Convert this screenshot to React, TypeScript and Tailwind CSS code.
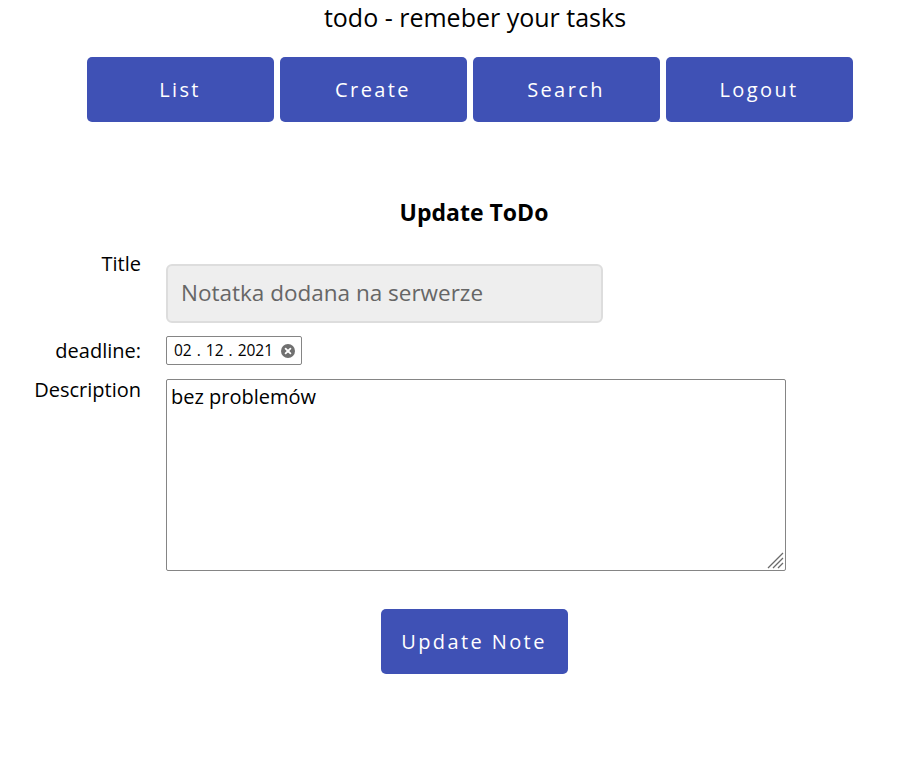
import React from "react";

const navItems = ["List", "Create", "Search", "Logout"];

function ClearIcon() {
  return (
    <svg width="14" height="14" viewBox="0 0 14 14" className="ml-[8px]">
      <circle cx="7" cy="7" r="7" fill="#707070" />
      <path d="M4.6 4.6 L9.4 9.4 M9.4 4.6 L4.6 9.4" stroke="#fff" strokeWidth="1.8" strokeLinecap="round" />
    </svg>
  );
}

function ResizeGrip() {
  return (
    <svg width="18" height="18" viewBox="0 0 18 18" className="pointer-events-none absolute bottom-[2px] right-[2px]">
      <path d="M17 2 L2 17 M17 7 L7 17 M17 12 L12 17" stroke="#6b6b6b" strokeWidth="1.3" />
    </svg>
  );
}

export default function App() {
  return (
    <div className="min-h-screen w-[924px] bg-white text-black" style={{ fontFamily: '"Open Sans", sans-serif' }}>
      {/* Header */}
      <h1 className="text-center text-[25px] leading-[34px] pl-[26px]">todo - remeber your tasks</h1>

      <nav className="mt-[23px] flex justify-center gap-[6px] pl-[15px]">
        {navItems.map((item) => (
          <button
            key={item}
            className="h-[65px] w-[187px] rounded-[5px] bg-[#3f51b5] text-[20px] tracking-[2.4px] text-white"
          >
            {item}
          </button>
        ))}
      </nav>

      {/* Form */}
      <h2 className="mt-[74px] text-center text-[23px] font-bold leading-[32px] pl-[24px]">Update ToDo</h2>

      <div className="mt-[36px] flex flex-col">
        <div className="flex items-start">
          <label className="-mt-[14px] w-[141px] text-right text-[20px] leading-[28px]">Title</label>
          <input
            readOnly
            value="Notatka dodana na serwerze"
            className="ml-[25px] h-[59px] w-[437px] rounded-[6px] border-2 border-[#dddddd] bg-[#eeeeee] px-[13px] pb-[2px] text-[22.5px] text-[#666666] outline-none"
          />
        </div>

        <div className="mt-[13px] flex items-center">
          <label className="w-[141px] text-right text-[20px] leading-[28px]">deadline:</label>
          <div className="ml-[25px] flex h-[29px] w-[136px] items-center rounded-[2px] border border-[#858585] pl-[7px] text-[15.5px]">
            <span>02</span>
            <span className="mx-[5px]">.</span>
            <span>12</span>
            <span className="mx-[5px]">.</span>
            <span>2021</span>
            <ClearIcon />
          </div>
        </div>

        <div className="mt-[14px] flex items-start">
          <label className="-mt-[3px] w-[141px] text-right text-[20px] leading-[28px]">Description</label>
          <div className="relative ml-[25px]">
            <textarea
              defaultValue="bez problemów"
              className="block h-[192px] w-[620px] resize-none rounded-[2px] border border-[#858585] px-[4px] py-[3px] text-[20px] leading-[28px] outline-none"
            />
            <ResizeGrip />
          </div>
        </div>
      </div>

      <div className="mt-[38px] flex justify-center pl-[24px]">
        <button className="h-[65px] w-[187px] rounded-[5px] bg-[#3f51b5] text-[20px] tracking-[2.4px] text-white">
          Update Note
        </button>
      </div>
    </div>
  );
}
